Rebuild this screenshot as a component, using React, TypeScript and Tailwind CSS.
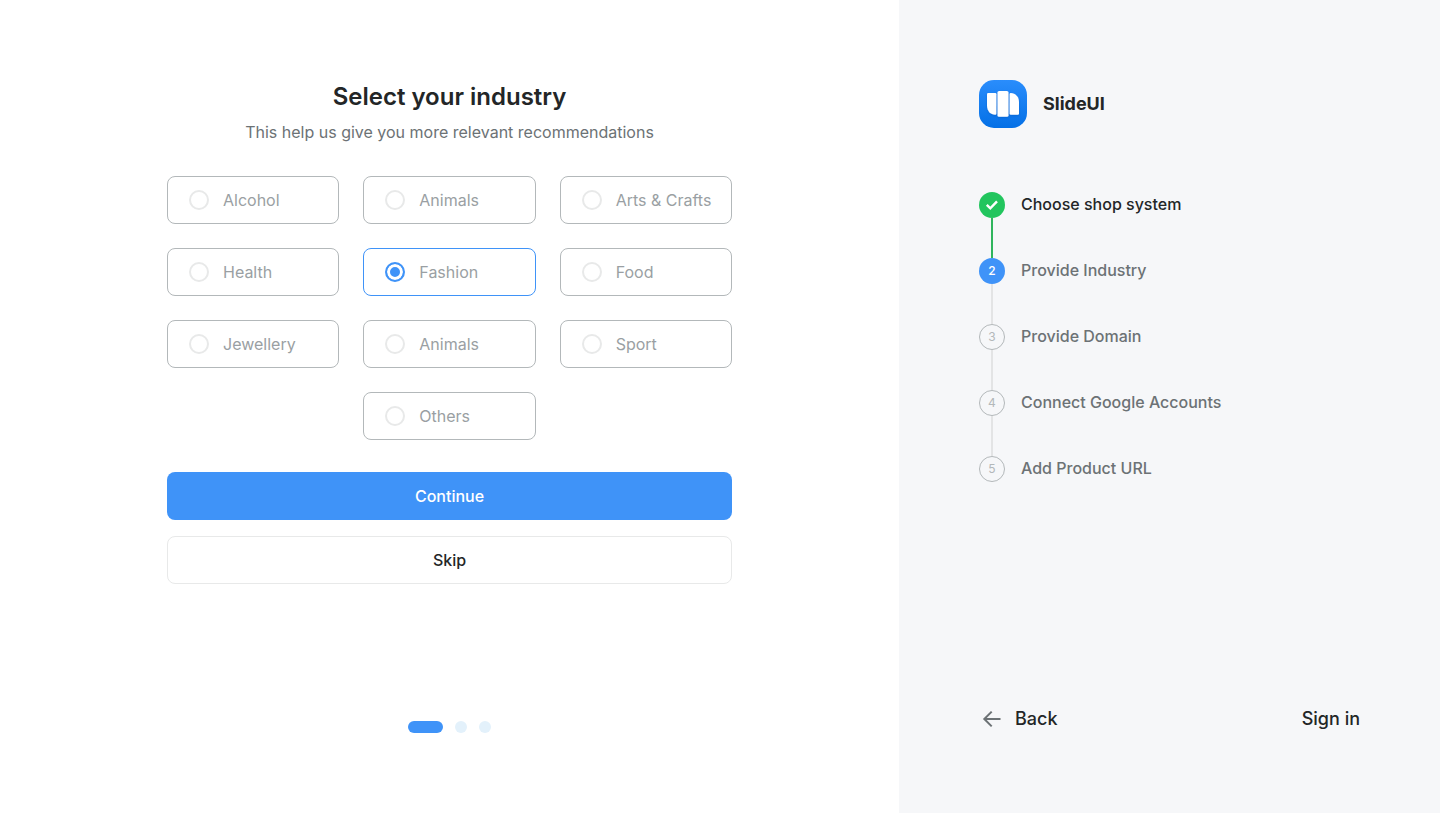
import { useState } from "react";

const industries = [
  { id: "alcohol", label: "Alcohol" },
  { id: "animals", label: "Animals" },
  { id: "arts", label: "Arts & Crafts" },
  { id: "health", label: "Health" },
  { id: "fashion", label: "Fashion" },
  { id: "food", label: "Food" },
  { id: "jewellery", label: "Jewellery" },
  { id: "animals-2", label: "Animals" },
  { id: "sport", label: "Sport" },
  { id: "others", label: "Others" },
];

const steps = [
  "Choose shop system",
  "Provide Industry",
  "Provide Domain",
  "Connect Google Accounts",
  "Add Product URL",
];

const currentStep = 1;

function Logo() {
  return (
    <svg className="size-12" viewBox="0 0 48 48" aria-hidden="true">
      <defs>
        <linearGradient id="logo-fill" x1="0" y1="0" x2="0" y2="1">
          <stop offset="0" stopColor="#2a8dfc" />
          <stop offset="1" stopColor="#0470e6" />
        </linearGradient>
        <filter id="logo-shadow" x="-20%" y="-20%" width="140%" height="150%">
          <feDropShadow dx="0" dy="1" stdDeviation="1" floodColor="#0049a8" floodOpacity="0.4" />
        </filter>
      </defs>
      <rect width="48" height="48" rx="15" fill="url(#logo-fill)" />
      <g fill="#fff" filter="url(#logo-shadow)">
        <path d="M9.200 13h7a1.200 1.200 0 0 1 1.200 1.200v19.400a1.200 1.200 0 0 1-1.200 1.200C11.500 34.800 8 31 8 25.500V14.200A1.200 1.200 0 0 1 9.200 13z" />
        <rect x="18.500" y="11" width="11" height="25.800" rx="1.600" />
        <path d="M31.800 13C36.500 13 40 17 40 22.300v11.300a1.200 1.200 0 0 1-1.200 1.200h-7a1.200 1.200 0 0 1-1.200-1.200V14.200A1.200 1.200 0 0 1 31.800 13z" />
      </g>
    </svg>
  );
}

function CheckIcon() {
  return (
    <svg className="size-[26px]" viewBox="0 0 26 26" fill="none" aria-hidden="true">
      <path d="M7.800 12.800l3.500 3.500 6.700-7" stroke="#fff" strokeWidth="2.400" />
    </svg>
  );
}

function ArrowIcon() {
  return (
    <svg className="size-6" viewBox="0 0 24 24" fill="none" aria-hidden="true">
      <path
        d="M21.500 12H5.500M12.700 4.600L5.300 12l7.400 7.400"
        stroke="#6c7275"
        strokeWidth="2"
      />
    </svg>
  );
}

function StepMarker({ index }: { index: number }) {
  if (index < currentStep) {
    return (
      <span className="flex size-[26px] items-center justify-center rounded-full bg-[#22c55e]">
        <CheckIcon />
      </span>
    );
  }
  if (index === currentStep) {
    return (
      <span className="flex size-[26px] items-center justify-center rounded-full bg-[#3f93f8] text-xs font-medium text-white">
        {index + 1}
      </span>
    );
  }
  return (
    <span className="flex size-[26px] items-center justify-center rounded-full border border-[#b3b8ba] text-xs text-[#b3b8ba]">
      {index + 1}
    </span>
  );
}

export default function App() {
  const [selected, setSelected] = useState("fashion");

  return (
    <div className="grid min-h-screen grid-cols-[899fr_541fr] bg-white font-['Inter',sans-serif] text-[#232627]">
      <main className="flex flex-col items-center px-6 py-20">
        <h1 className="text-2xl leading-[34px] font-semibold">Select your industry</h1>
        <p className="mt-1.5 text-base text-[#6c7275]">
          This help us give you more relevant recommendations
        </p>

        <form
          className="mt-8 w-full max-w-[565px]"
          onSubmit={(event) => event.preventDefault()}
        >
          <fieldset className="grid grid-cols-3 gap-6" aria-label="Industry">
            {industries.map(({ id, label }) => (
              <label
                key={id}
                htmlFor={id}
                className="flex h-12 cursor-pointer items-center gap-3.5 rounded-lg border border-[#b3b8ba] pl-[21px] text-base text-[#9a9fa3] last:col-start-2 has-checked:border-[#3f93f8]"
              >
                <input
                  id={id}
                  type="radio"
                  name="industry"
                  value={id}
                  checked={selected === id}
                  onChange={() => setSelected(id)}
                  className="size-5 shrink-0 cursor-pointer appearance-none rounded-full border-2 border-[#e8e9e9] checked:border-[#3f93f8] checked:bg-[#3f93f8] checked:shadow-[inset_0_0_0_3px_#fff]"
                />
                <span className="whitespace-nowrap">{label}</span>
              </label>
            ))}
          </fieldset>

          <div className="mt-8 flex flex-col gap-4">
            <button
              type="submit"
              className="h-12 rounded-lg bg-[#3f93f8] text-base font-medium text-white"
            >
              Continue
            </button>
            <button
              type="button"
              className="h-12 rounded-lg border border-[#e8e9e9] text-base font-medium"
            >
              Skip
            </button>
          </div>
        </form>

        <div className="mt-auto flex items-center gap-3 pt-10">
          <span className="h-3 w-[35px] rounded-full bg-[#3f93f8]" />
          <span className="size-3 rounded-full bg-[#e3f1fb]" />
          <span className="size-3 rounded-full bg-[#e3f1fb]" />
        </div>
      </main>

      <aside className="flex flex-col bg-[#f6f7f9] p-20">
        <div className="flex items-center gap-4">
          <Logo />
          <span className="text-lg leading-[30px] font-bold">SlideUI</span>
        </div>

        <ol className="mt-16">
          {steps.map((step, index) => (
            <li key={step} className="flex gap-4">
              <div className="flex flex-col items-center">
                <StepMarker index={index} />
                {index < steps.length - 1 && (
                  <span
                    className={
                      index < currentStep
                        ? "h-10 w-0.5 bg-[#2fb55d]"
                        : "h-10 w-0.5 bg-[#e3e4e5]"
                    }
                  />
                )}
              </div>
              <span
                className={
                  index < currentStep
                    ? "text-base font-medium"
                    : "text-base font-medium text-[#6c7275]"
                }
              >
                {step}
              </span>
            </li>
          ))}
        </ol>

        <div className="mt-auto flex items-center justify-between pt-10">
          <a href="#back" className="flex items-center gap-3 text-lg font-medium">
            <ArrowIcon />
            Back
          </a>
          <a href="#sign-in" className="text-lg font-medium">
            Sign in
          </a>
        </div>
      </aside>
    </div>
  );
}
